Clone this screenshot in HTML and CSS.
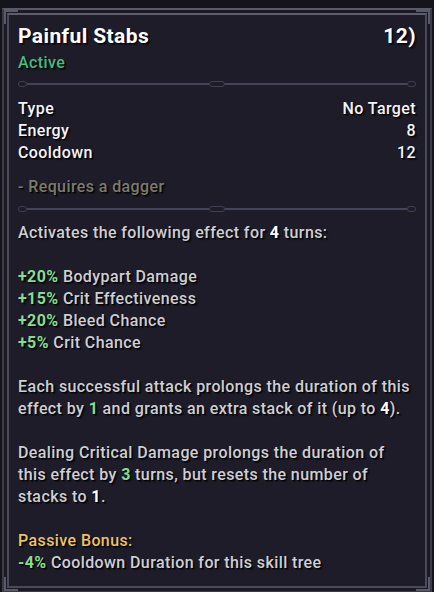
FILE: index.html
```html
<!DOCTYPE html>
<html lang="en">
<head>
    <meta charset="UTF-8">
    <meta name="viewport" content="width=device-width, initial-scale=1.0">
    <title>Painful Stabs</title>
    <link rel="stylesheet" href="styles.css">
</head>
<body>
    <div class="frame">
        <span class="corner tl"></span><span class="corner tr"></span>
        <span class="corner bl"></span><span class="corner br"></span>
        <div class="panel">
            <div class="header">
                <span class="title">Painful Stabs</span>
                <span class="title">12)</span>
            </div>
            <div class="active">Active</div>

            <div class="divider">
                <span class="knot"></span><span class="line"></span><span class="knot mid"></span><span class="line"></span><span class="knot"></span>
            </div>

            <div class="stats">
                <div class="row"><span>Type</span><span>No Target</span></div>
                <div class="row"><span>Energy</span><span>8</span></div>
                <div class="row"><span>Cooldown</span><span>12</span></div>
            </div>
            <div class="requires">- Requires a dagger</div>

            <div class="divider">
                <span class="knot"></span><span class="line"></span><span class="knot mid"></span><span class="line"></span><span class="knot"></span>
            </div>

            <div class="desc">
                <p>Activates the following effect for <b class="white">4</b> turns:</p>
                <p>
                    <b class="green">+20%</b> Bodypart Damage<br>
                    <b class="green">+15%</b> Crit Effectiveness<br>
                    <b class="green">+20%</b> Bleed Chance<br>
                    <b class="green">+5%</b> Crit Chance
                </p>
                <p>Each successful attack prolongs the duration of this effect by <b class="green">1</b> and grants an extra stack of it (up to <b class="white">4</b>).</p>
                <p>Dealing Critical Damage prolongs the duration of this effect by <b class="green">3</b> turns, but resets the number of stacks to <b class="white">1</b>.</p>
                <p><span class="gold">Passive Bonus:</span><br><b class="green">-4%</b> Cooldown Duration for this skill tree</p>
            </div>
        </div>
    </div>
</body>
</html>
```

FILE: styles.css
```css
body {
    margin: 0;
    background: #15141c;
    font-family: Roboto, "Noto Sans", sans-serif;
    font-size: 16px;
    letter-spacing: 0.4px;
    color: #cfced3;
    text-shadow: 1px 1px 0 #050508, 2px 2px 1px rgba(0, 0, 0, 0.5);
}
.frame {
    position: relative;
    margin: 8px 2px 0;
    height: 575px;
    border: 2px solid #3b3a48;
    border-top-color: #5a596b;
    padding: 3px;
    background: #1a1924;
}
.corner {
    position: absolute;
    width: 12px;
    height: 12px;
    border: 2px solid #5a596a;
}
.corner.tl { top: 0; left: 0; border-right: none; border-bottom: none; }
.corner.tr { top: 0; right: 0; border-left: none; border-bottom: none; }
.corner.bl { bottom: 0; left: 0; border-right: none; border-top: none; }
.corner.br { bottom: 0; right: 0; border-left: none; border-top: none; }
.panel {
    height: 100%;
    box-sizing: border-box;
    border: 2px solid #4a495a;
    border-top-color: #5e5d70;
    background: #1d1c28;
    padding: 7px 9px 0 9px;
}
.header {
    display: flex;
    justify-content: space-between;
    line-height: 28px;
}
.title {
    font-size: 21px;
    font-weight: 700;
    letter-spacing: 0.4px;
    color: #ffffff;
}
.active {
    color: #3fbf80;
    font-weight: 500;
    line-height: 22px;
    margin-top: 2px;
}
.divider {
    display: flex;
    align-items: center;
    height: 6px;
    margin: 7px 0 11px;
}
.divider .line {
    flex: 1;
    height: 2px;
    background: #43435a;
}
.knot {
    width: 7px;
    height: 4px;
    border: 1px solid #3f3f52;
    border-radius: 3px;
}
.knot.mid {
    width: 14px;
}
.stats .row {
    display: flex;
    justify-content: space-between;
    line-height: 22px;
    color: #f4f4f6;
    font-weight: 500;
}
.requires {
    margin-top: 12px;
    line-height: 22px;
    color: #7c7b6c;
    font-weight: 500;
}
.requires + .divider {
    margin: 8px 0 10px;
}
.desc {
    padding-right: 4px;
}
.desc p {
    margin: 0 0 22px;
    line-height: 22px;
    font-weight: 500;
}
.green {
    color: #86dd8e;
}
.white {
    color: #ffffff;
}
.gold {
    color: #eec35c;
}
```
